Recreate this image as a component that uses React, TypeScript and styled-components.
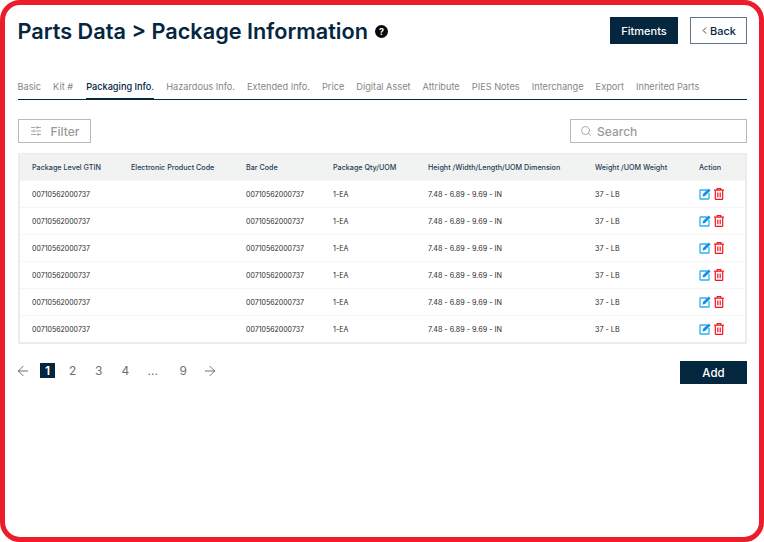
import * as React from "react";
import styled, { createGlobalStyle } from "styled-components";
import { ArrowLeft, ArrowRight, ChevronLeft, Search, SlidersHorizontal } from "lucide-react";

const navy = "#04263f";
const font = `Inter, "Liberation Sans", sans-serif`;

const Global = createGlobalStyle`
  html, body { margin: 0; padding: 0; background: #fff; }
  * { box-sizing: border-box; }
`;

const Frame = styled.div`
  width: 764px;
  height: 542px;
  border: 5px solid #ed1c2b;
  border-radius: 20px;
  padding: 10px 12px 0 12.5px;
  font-family: ${font};
  color: ${navy};
  background: #fff;
  overflow: hidden;
`;

const Header = styled.header`
  display: flex;
  justify-content: space-between;
  align-items: flex-start;
  height: 54px;
  padding-top: 2px;
`;

const TitleWrap = styled.div`
  display: flex;
  align-items: center;
  gap: 7px;
  height: 27px;
  margin-top: 1px;
`;

const Title = styled.h1`
  margin: 0;
  font-size: 21.7px;
  line-height: 27px;
  font-weight: 600;
  letter-spacing: 0;
`;

const Help = styled.span`
  width: 13px;
  height: 13px;
  border-radius: 50%;
  background: #0a0a0a;
  color: #fff;
  font-size: 9px;
  font-weight: 700;
  display: flex;
  align-items: center;
  justify-content: center;
`;

const Actions = styled.div`
  display: flex;
  gap: 12px;
`;

const Button = styled.button<{ $outline?: boolean; $w: number }>`
  width: ${(p) => p.$w}px;
  height: 27px;
  font-family: ${font};
  font-size: 11px;
  font-weight: 500;
  display: flex;
  align-items: center;
  justify-content: center;
  padding: 0 ${(p) => (p.$outline ? 2 : 0)}px 0 0;
  border: 1px solid ${(p) => (p.$outline ? "#5d7689" : navy)};
  background: ${(p) => (p.$outline ? "#fff" : navy)};
  color: ${(p) => (p.$outline ? navy : "#fff")};
`;

const Tabs = styled.nav`
  display: flex;
  gap: 12.1px;
  height: 31px;
  border-bottom: 1px solid ${navy};
`;

const Tab = styled.a<{ $active?: boolean }>`
  height: 31px;
  padding-top: 12px;
  margin-left: ${(p) => (p.$active ? 1 : 0)}px;
  font-size: 9.2px;
  line-height: 12px;
  white-space: nowrap;
  color: ${(p) => (p.$active ? navy : "#84878a")};
  font-weight: ${(p) => (p.$active ? 500 : 400)};
  border-bottom: ${(p) => (p.$active ? `2px solid ${navy}` : "none")};
`;

const Toolbar = styled.div`
  display: flex;
  justify-content: space-between;
  margin-top: 19px;
`;

const Field = styled.div<{ $w: number; $pad: number; $gap: number }>`
  width: ${(p) => p.$w}px;
  height: 24px;
  border: 1px solid #b9b9b9;
  display: flex;
  align-items: center;
  padding-left: ${(p) => p.$pad}px;
  gap: ${(p) => p.$gap}px;
  color: #9a9a9a;
  font-size: 12px;
  font-weight: 500;
`;

const Table = styled.div`
  margin-top: 10px;
  border: 2px solid #ececec;
  border-top-width: 1px;
`;

const Row = styled.div<{ $head?: boolean }>`
  display: grid;
  grid-template-columns: 99px 115px 87px 95px 167px 104px 1fr;
  align-items: center;
  height: ${(p) => (p.$head ? 26 : 27)}px;
  padding-left: 12.5px;
  background: ${(p) => (p.$head ? "#f1f2f2" : "#fff")};
  border-top: ${(p) => (p.$head ? "none" : "1px solid #f6f6f6")};
  font-size: 7.2px;
  font-weight: ${(p) => (p.$head ? 500 : 400)};
  color: ${(p) => (p.$head ? "#1f3b50" : "#2b2b2b")};
  white-space: nowrap;
`;

const Code = styled.span`
  font-size: 7px;
`;

const RowActions = styled.div`
  display: flex;
  align-items: center;
  gap: 3px;
`;

const Footer = styled.div`
  display: flex;
  justify-content: space-between;
  align-items: flex-start;
  margin-top: 17px;
`;

const Pager = styled.div`
  display: flex;
  align-items: center;
  height: 17px;
  margin-top: 1px;
  color: #5c5c5c;
`;

const Page = styled.span<{ $active?: boolean; $w: number }>`
  width: ${(p) => p.$w}px;
  height: 15px;
  margin-right: ${(p) => (p.$active ? 14 : 0)}px;
  display: flex;
  align-items: center;
  justify-content: ${(p) => (p.$active ? "center" : "flex-start")};
  font-size: 12px;
  background: ${(p) => (p.$active ? navy : "transparent")};
  color: ${(p) => (p.$active ? "#fff" : "#6f6f6f")};
  font-weight: ${(p) => (p.$active ? 600 : 400)};
`;

const PrevSlot = styled.span`
  width: 25.5px;
  margin-left: -3px;
  display: flex;
  align-items: center;
`;

const AddButton = styled.button`
  width: 67px;
  height: 23px;
  background: ${navy};
  border: none;
  color: #fff;
  font-family: ${font};
  font-size: 11.5px;
  font-weight: 500;
  padding: 0;
`;

const tabs = [
  "Basic",
  "Kit #",
  "Packaging Info.",
  "Hazardous Info.",
  "Extended Info.",
  "Price",
  "Digital Asset",
  "Attribute",
  "PIES Notes",
  "Interchange",
  "Export",
  "Inherited Parts",
];

const columns = [
  "Package Level GTIN",
  "Electronic Product Code",
  "Bar Code",
  "Package Qty/UOM",
  "Height /Width/Length/UOM Dimension",
  "Weight /UOM Weight",
  "Action",
];

const EditIcon = () => (
  <svg width="12" height="12" viewBox="0 0 12 12" fill="none">
    <path d="M8 2H1.6a.6.6 0 0 0-.6.6v7.8a.6.6 0 0 0 .6.6h7.8a.6.6 0 0 0 .6-.6V5" stroke="#2cb0f0" strokeWidth="1.3" />
    <path d="M9.6.4 11.6 2.4 6 8 3.6 8.5 4 6z" fill="#1a8fe0" />
  </svg>
);

const TrashIcon = () => (
  <svg width="10" height="12" viewBox="0 0 10 12" fill="none" stroke="#f0141e" strokeWidth="1.2">
    <path d="M0 2.2h10" />
    <path d="M3.2 2V.7h3.6V2" />
    <path d="M1.3 2.4v8.3c0 .4.3.7.7.7h6c.4 0 .7-.3.7-.7V2.4" />
    <path d="M3.8 4.4v4.8M6.2 4.4v4.8" />
  </svg>
);

export default function App() {
  return (
    <Frame>
      <Global />
      <Header>
        <TitleWrap>
          <Title>Parts Data &gt; Package Information</Title>
          <Help>?</Help>
        </TitleWrap>
        <Actions>
          <Button $w={68}>Fitments</Button>
          <Button $outline $w={57}>
            <ChevronLeft size={11} strokeWidth={1.8} />
            Back
          </Button>
        </Actions>
      </Header>

      <Tabs>
        {tabs.map((t) => (
          <Tab key={t} $active={t === "Packaging Info."}>
            {t}
          </Tab>
        ))}
      </Tabs>

      <Toolbar>
        <Field $w={73} $pad={11} $gap={9}>
          <SlidersHorizontal size={12} strokeWidth={1.3} color="#777" />
          Filter
        </Field>
        <Field $w={177} $pad={9} $gap={5}>
          <Search size={12} strokeWidth={1.4} color="#888" />
          Search
        </Field>
      </Toolbar>

      <Table>
        <Row $head>
          {columns.map((c) => (
            <span key={c}>{c}</span>
          ))}
        </Row>
        {[0, 1, 2, 3, 4, 5].map((i) => (
          <Row key={i}>
            <Code>00710562000737</Code>
            <span />
            <Code>00710562000737</Code>
            <span>1-EA</span>
            <span>7.48 - 6.89 - 9.69 - IN</span>
            <span>37 - LB</span>
            <RowActions>
              <EditIcon />
              <TrashIcon />
            </RowActions>
          </Row>
        ))}
      </Table>

      <Footer>
        <Pager>
          <PrevSlot>
            <ArrowLeft size={16} strokeWidth={1.3} />
          </PrevSlot>
          <Page $active $w={15}>
            1
          </Page>
          <Page $w={26}>2</Page>
          <Page $w={26.5}>3</Page>
          <Page $w={26}>4</Page>
          <Page $w={32}>...</Page>
          <Page $w={22}>9</Page>
          <ArrowRight size={16} strokeWidth={1.3} />
        </Pager>
        <AddButton>Add</AddButton>
      </Footer>
    </Frame>
  );
}
